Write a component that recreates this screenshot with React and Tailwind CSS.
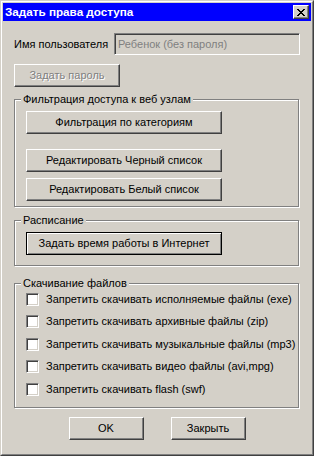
import React from "react";

function Btn({ children, className = "", def = false, disabled = false }) {
  const border = def
    ? "border border-black shadow-[inset_1px_1px_0_#fff,inset_-1px_-1px_0_#808080]"
    : "border border-t-white border-l-white border-r-[#404040] border-b-[#404040] shadow-[inset_-1px_-1px_0_#808080]";
  return (
    <div
      className={`flex items-center justify-center bg-[#d4d0c8] leading-none ${border} ${
        disabled ? "text-[#808080] [text-shadow:1px_1px_0_#fff]" : "text-black"
      } ${className}`}
    >
      {children}
    </div>
  );
}

function Group({ label, className = "", children }) {
  return (
    <div
      className={`relative mr-[1px] border border-[#808080] shadow-[inset_1px_1px_0_#fff,1px_1px_0_#fff] ${className}`}
    >
      <div className="absolute top-[-7px] left-[6px] px-[2px] bg-[#d4d0c8] leading-[13px] whitespace-nowrap">
        {label}
      </div>
      {children}
    </div>
  );
}

function Check({ children }) {
  return (
    <div className="flex items-center h-[22.5px] gap-[7px]">
      <div className="w-[13px] h-[13px] bg-white border border-t-[#808080] border-l-[#808080] border-r-white border-b-white shadow-[inset_1px_1px_0_#404040,inset_-1px_-1px_0_#d4d0c8]" />
      <span className="leading-none whitespace-nowrap">{children}</span>
    </div>
  );
}

function CloseGlyph() {
  const rows = [
    "XX....XX",
    ".XX..XX.",
    "..XXXX..",
    "...XX...",
    "..XXXX..",
    ".XX..XX.",
    "XX....XX",
  ];
  const rects = [];
  rows.forEach((r, y) =>
    r.split("").forEach((c, x) => {
      if (c === "X") rects.push(<rect key={`${x}-${y}`} x={x} y={y} width="1" height="1" fill="#000" />);
    })
  );
  return (
    <svg width="8" height="7" viewBox="0 0 8 7" shapeRendering="crispEdges">
      {rects}
    </svg>
  );
}

export default function App() {
  return (
    <div className="w-[314px] h-[456px] bg-[#d4d0c8] border border-t-[#d4d0c8] border-l-[#d4d0c8] border-r-[#404040] border-b-[#404040] font-['Liberation_Sans',Arial,sans-serif] text-[11px] text-black">
      <div className="h-full border border-t-white border-l-white border-r-[#808080] border-b-[#808080] p-[1px] flex flex-col">
        <div className="h-[18px] bg-[#0000ff] flex items-center justify-between pl-[2px] pr-[2px]">
          <span className="text-white font-bold text-[11.7px] leading-none whitespace-nowrap">
            Задать права доступа
          </span>
          <div className="w-[16px] h-[14px] bg-[#d4d0c8] flex items-center justify-center pr-[1px] border border-t-white border-l-white border-r-[#404040] border-b-[#404040] shadow-[inset_-1px_-1px_0_#808080]">
            <CloseGlyph />
          </div>
        </div>

        <div className="flex-1 px-[11px] flex flex-col">
          <div className="mt-[12px] flex items-center h-[22px]">
            <span className="w-[100px] whitespace-nowrap leading-none">Имя пользователя</span>
            <div className="flex-1 h-[22px] flex items-center pl-[3px] text-[#808080] border border-t-[#808080] border-l-[#808080] border-r-white border-b-white shadow-[inset_1px_1px_0_#404040,inset_-1px_-1px_0_#d4d0c8] whitespace-nowrap leading-none">
              Ребенок (без пароля)
            </div>
          </div>

          <Btn disabled className="mt-[9px] w-[106px] h-[23px]">
            Задать пароль
          </Btn>

          <Group label="Фильтрация доступа к веб узлам" className="mt-[12px] h-[108px] pt-[11px] pl-[11px]">
            <Btn className="w-[196px] h-[23px]">Фильтрация по категориям</Btn>
            <Btn className="mt-[15px] w-[196px] h-[23px]">Редактировать Черный список</Btn>
            <Btn className="mt-[6px] w-[196px] h-[23px]">Редактировать Белый список</Btn>
          </Group>

          <Group label="Расписание" className="mt-[13px] h-[46px] pt-[11px] pl-[11px]">
            <Btn def className="w-[196px] h-[23px]">
              Задать время работы в Интернет
            </Btn>
          </Group>

          <Group label="Скачивание файлов" className="mt-[17px] h-[125px] pt-[4px] pl-[11px]">
            <Check>Запретить скачивать исполняемые файлы (exe)</Check>
            <Check>Запретить скачивать архивные файлы (zip)</Check>
            <Check>Запретить скачивать музыкальные файлы (mp3)</Check>
            <Check>Запретить скачивать видео файлы (avi,mpg)</Check>
            <Check>Запретить скачивать flash (swf)</Check>
          </Group>

          <div className="mt-[9px] flex justify-center gap-[27px]">
            <Btn className="w-[75px] h-[23px]">OK</Btn>
            <Btn className="w-[75px] h-[23px]">Закрыть</Btn>
          </div>
        </div>
      </div>
    </div>
  );
}
